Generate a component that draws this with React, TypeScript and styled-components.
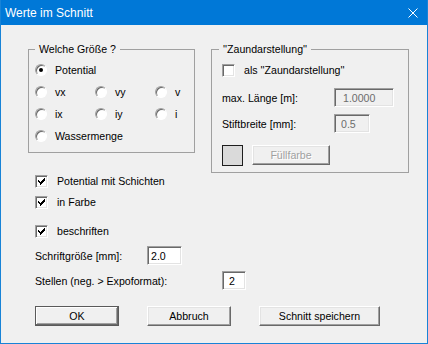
import React from 'react';
import styled, { createGlobalStyle } from 'styled-components';

const GlobalStyle = createGlobalStyle`
  html, body {
    margin: 0;
    padding: 0;
    background: #ffffff;
  }
`;

const Window = styled.div`
  width: 428px;
  height: 344px;
  box-sizing: border-box;
  border: 1px solid #1883d7;
  border-top: none;
  background: #f0f0f0;
  display: flex;
  flex-direction: column;
  font-family: 'Liberation Sans', Arial, sans-serif;
  font-size: 10.6px;
  color: #000;
  overflow: hidden;
`;

const TitleBar = styled.div`
  height: 25px;
  flex: none;
  background: #0078d7;
  color: #fff;
  display: flex;
  align-items: center;
  justify-content: space-between;
  padding: 0 9px 0 4px;
  font-size: 12px;
`;

const Body = styled.div`
  flex: 1;
  display: flex;
  flex-direction: column;
  padding: 17px 0 0 27px;
`;

const TopRow = styled.div`
  display: flex;
  align-items: flex-start;
  gap: 16px;
`;

const GroupBox = styled.fieldset<{ $width: number; $padLeft: number; $padBottom: number }>`
  margin: 0;
  box-sizing: border-box;
  min-width: 0;
  width: ${(p) => p.$width}px;
  padding: 3px 0 ${(p) => p.$padBottom}px ${(p) => p.$padLeft}px;
  border: 1px solid #a0a0a0;
`;

const Legend = styled.legend<{ $shift?: number }>`
  padding: 0 4px;
  margin-left: ${(p) => p.$shift || 0}px;
  line-height: 14px;
  white-space: nowrap;
`;

const RadioGrid = styled.div`
  display: grid;
  grid-template-columns: repeat(3, 60px);
  grid-auto-rows: 22px;
`;

const RadioItem = styled.label<{ $wide?: boolean }>`
  display: flex;
  align-items: center;
  gap: 8px;
  white-space: nowrap;
  grid-column: ${(p) => (p.$wide ? '1 / span 3' : 'auto')};
`;

const RadioDot = styled.span<{ $checked?: boolean }>`
  width: 12px;
  height: 12px;
  box-sizing: border-box;
  border-radius: 50%;
  border: 1px solid;
  border-color: #a0a0a0 #ffffff #ffffff #a0a0a0;
  box-shadow: inset 1px 1px 0 #696969;
  background: #fff;
  display: flex;
  align-items: center;
  justify-content: center;
  flex: none;

  &::after {
    content: '';
    display: ${(p) => (p.$checked ? 'block' : 'none')};
    width: 4px;
    height: 4px;
    border-radius: 50%;
    background: #000;
  }
`;

const CheckRow = styled.label<{ $height: number; $top?: number }>`
  display: flex;
  align-items: center;
  gap: 9px;
  height: ${(p) => p.$height}px;
  margin-top: ${(p) => p.$top || 0}px;
  white-space: nowrap;
`;

const CheckBox = styled.span`
  width: 13px;
  height: 13px;
  box-sizing: border-box;
  border: 1px solid;
  border-color: #a0a0a0 #ffffff #ffffff #a0a0a0;
  box-shadow: inset 1px 1px 0 #696969, inset -1px -1px 0 #e3e3e3;
  background: #fff;
  display: flex;
  align-items: center;
  justify-content: center;
  flex: none;
`;

const FieldRow = styled.div<{ $top: number; $labelWidth: number }>`
  display: grid;
  grid-template-columns: ${(p) => p.$labelWidth}px auto;
  align-items: center;
  height: 19px;
  margin-top: ${(p) => p.$top}px;
  white-space: nowrap;
`;

const TextField = styled.input<{ $width: number; $indent: number }>`
  width: ${(p) => p.$width}px;
  height: 19px;
  box-sizing: border-box;
  margin: 0;
  padding: 0 0 0 ${(p) => p.$indent}px;
  border: 1px solid;
  border-color: #a0a0a0 #ffffff #ffffff #a0a0a0;
  box-shadow: inset 1px 1px 0 #696969, inset -1px -1px 0 #e3e3e3;
  background: ${(p) => (p.disabled ? '#f0f0f0' : '#ffffff')};
  color: ${(p) => (p.disabled ? '#6d6d6d' : '#000000')};
  font: inherit;
  outline: none;
`;

const ColorRow = styled.div`
  display: flex;
  align-items: flex-start;
  gap: 9px;
  margin-top: 12px;
  height: 21px;
`;

const Swatch = styled.span`
  width: 21px;
  height: 21px;
  box-sizing: border-box;
  border: 1px solid #1e1e1e;
  background: #dadada;
`;

const Button = styled.button<{ $width: number; $isDefault?: boolean }>`
  width: ${(p) => p.$width}px;
  height: 20px;
  box-sizing: border-box;
  margin: 0;
  padding: 0;
  font: inherit;
  background: #f0f0f0;
  color: #000;
  border: 1px solid;
  border-color: ${(p) => (p.$isDefault ? '#5a5a5a' : '#ffffff #696969 #696969 #ffffff')};
  box-shadow: ${(p) =>
    p.$isDefault
      ? 'inset -1px -1px 0 #696969, inset 1px 1px 0 #ffffff, inset -2px -2px 0 #a0a0a0'
      : 'inset -1px -1px 0 #a0a0a0, inset 1px 1px 0 #e3e3e3'};

  &:disabled {
    color: #a0a0a0;
    text-shadow: 1px 1px 0 #ffffff;
  }
`;

const Lower = styled.div`
  display: flex;
  flex-direction: column;
  margin-left: 7px;
`;

const ButtonRow = styled.div`
  display: flex;
  gap: 28px;
  margin-top: 16px;
`;

function CheckMark() {
  return (
    <svg width="7" height="7" viewBox="0 0 7 7">
      <path d="M6 0 H7 V2 L3 6 V7 H2 V6 L0 4 V2 L2 4 H3 Z" fill="#000" shapeRendering="crispEdges" />
    </svg>
  );
}

function CloseIcon() {
  return (
    <svg width="10" height="10" viewBox="0 0 10 10">
      <path d="M0.5 0.5 L9.5 9.5 M9.5 0.5 L0.5 9.5" stroke="#fff" strokeWidth="1" />
    </svg>
  );
}

export default function App() {
  return (
    <>
      <GlobalStyle />
      <Window>
        <TitleBar>
          <span>Werte im Schnitt</span>
          <CloseIcon />
        </TitleBar>
        <Body>
          <TopRow>
            <GroupBox $width={167} $padLeft={6} $padBottom={5}>
              <Legend>Welche Größe ?</Legend>
              <RadioGrid>
                <RadioItem $wide>
                  <RadioDot $checked />
                  Potential
                </RadioItem>
                <RadioItem>
                  <RadioDot />
                  vx
                </RadioItem>
                <RadioItem>
                  <RadioDot />
                  vy
                </RadioItem>
                <RadioItem>
                  <RadioDot />
                  v
                </RadioItem>
                <RadioItem>
                  <RadioDot />
                  ix
                </RadioItem>
                <RadioItem>
                  <RadioDot />
                  iy
                </RadioItem>
                <RadioItem>
                  <RadioDot />
                  i
                </RadioItem>
                <RadioItem $wide>
                  <RadioDot />
                  Wassermenge
                </RadioItem>
              </RadioGrid>
            </GroupBox>

            <GroupBox $width={198} $padLeft={10} $padBottom={6}>
              <Legend $shift={-3}>''Zaundarstellung''</Legend>
              <CheckRow $height={22}>
                <CheckBox />
                als ''Zaundarstellung''
              </CheckRow>
              <FieldRow $top={7} $labelWidth={112}>
                <span>max. Länge [m]:</span>
                <TextField $width={60} $indent={8} defaultValue="1.0000" disabled />
              </FieldRow>
              <FieldRow $top={7} $labelWidth={112}>
                <span>Stiftbreite [mm]:</span>
                <TextField $width={36} $indent={6} defaultValue="0.5" disabled />
              </FieldRow>
              <ColorRow>
                <Swatch />
                <Button $width={78} disabled>
                  Füllfarbe
                </Button>
              </ColorRow>
            </GroupBox>
          </TopRow>

          <Lower>
            <CheckRow $height={16}>
              <CheckBox>
                <CheckMark />
              </CheckBox>
              Potential mit Schichten
            </CheckRow>
            <CheckRow $height={16} $top={5}>
              <CheckBox>
                <CheckMark />
              </CheckBox>
              in Farbe
            </CheckRow>
            <CheckRow $height={16} $top={13}>
              <CheckBox>
                <CheckMark />
              </CheckBox>
              beschriften
            </CheckRow>
            <FieldRow $top={7} $labelWidth={112}>
              <span>Schriftgröße [mm]:</span>
              <TextField $width={35} $indent={3} defaultValue="2.0" />
            </FieldRow>
            <FieldRow $top={6} $labelWidth={187}>
              <span>Stellen (neg. &gt; Expoformat):</span>
              <TextField $width={24} $indent={6} defaultValue="2" />
            </FieldRow>
            <ButtonRow>
              <Button $width={84} $isDefault>
                OK
              </Button>
              <Button $width={84}>Abbruch</Button>
              <Button $width={121}>Schnitt speichern</Button>
            </ButtonRow>
          </Lower>
        </Body>
      </Window>
    </>
  );
}
